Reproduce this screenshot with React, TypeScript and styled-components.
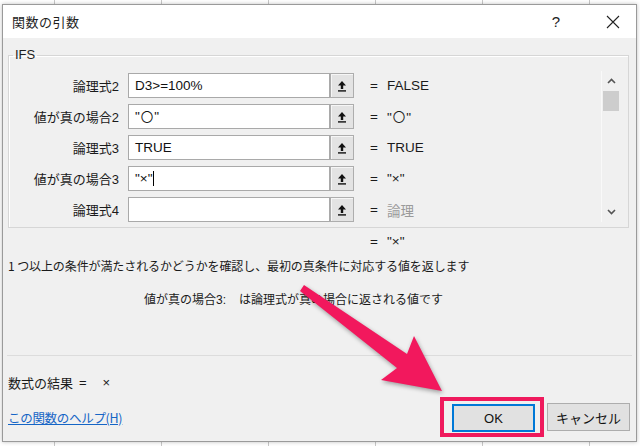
import styled, { createGlobalStyle } from "styled-components";

const GlobalStyle = createGlobalStyle`
  html, body {
    margin: 0;
    padding: 0;
    background: #ffffff;
  }
  body {
    font-family: "Liberation Sans", "Noto Sans CJK JP", sans-serif;
    font-size: 13px;
    color: #1a1a1a;
  }
`;

const Page = styled.div`
  position: relative;
  width: 640px;
  height: 446px;
  box-sizing: border-box;
  padding: 4px 3px 4px 2px;
  background-color: #ffffff;
  background-image: repeating-linear-gradient(
    to right,
    transparent 0 54px,
    #c8c8c8 54px 55px,
    transparent 55px 107px
  );
  overflow: hidden;
`;

const Dialog = styled.div`
  position: relative;
  width: 635px;
  height: 438px;
  box-sizing: border-box;
  border: 1px solid #9a9a9a;
  background: #f0f0f0;
  display: flex;
  flex-direction: column;
  box-shadow: 0 0 4px rgba(0, 0, 0, 0.25);
`;

const TitleBar = styled.div`
  height: 33px;
  flex: none;
  background: #ffffff;
  display: flex;
  align-items: center;
  padding-left: 9px;
`;

const Title = styled.div`
  flex: 1;
  font-family: "Noto Sans CJK JP", sans-serif;
  font-size: 13px;
  color: #1e1e1e;
  letter-spacing: 0.5px;
`;

const TitleButton = styled.div<{ $w: number }>`
  width: ${(p) => p.$w}px;
  height: 33px;
  display: flex;
  align-items: center;
  justify-content: center;
  font-family: "Liberation Sans", sans-serif;
  font-size: 15px;
  color: #222;
`;

const Group = styled.fieldset`
  margin: 9px 7px 0 5px;
  padding: 9px 8px 5px 4px;
  border: 1px solid #d6d6d6;
  box-shadow: inset 1px 1px 0 #ffffff;
  display: flex;
  min-width: 0;
`;

const Legend = styled.legend`
  padding: 0 2px;
  font-size: 13px;
  line-height: 16px;
  color: #1e1e1e;
`;

const Rows = styled.div`
  flex: 1;
  display: flex;
  flex-direction: column;
  gap: 6px;
  padding-top: 1px;
`;

const Row = styled.div`
  height: 25px;
  display: flex;
  align-items: center;
`;

const Label = styled.div`
  width: 106px;
  margin-right: 9px;
  text-align: right;
  font-size: 13px;
  white-space: nowrap;
`;

const Field = styled.div`
  width: 202px;
  height: 25px;
  box-sizing: border-box;
  border: 1px solid #a9a9a9;
  background: #ffffff;
  display: flex;
  align-items: center;
  padding-left: 6px;
  font-size: 13.5px;
  color: #111;
  white-space: pre;
`;

const Caret = styled.span`
  display: inline-block;
  width: 1px;
  height: 15px;
  margin-left: 1px;
  background: #000;
`;

const Circle = styled.span`
  font-family: "Noto Sans CJK JP", sans-serif;
  font-size: 12.5px;
  margin: 0 1px;
`;

const PickButton = styled.div`
  width: 24px;
  height: 25px;
  box-sizing: border-box;
  border: 1px solid #adadad;
  background: #e3e3e3;
  box-shadow: inset 1px 1px 0 #f6f6f6;
  display: flex;
  align-items: center;
  justify-content: center;
`;

const Equals = styled.span`
  margin-left: 16px;
  width: 17px;
  flex: none;
  font-size: 13.5px;
`;

const Value = styled.span<{ $muted?: boolean }>`
  font-size: 13.5px;
  color: ${(p) => (p.$muted ? "#9a9a9a" : "#1a1a1a")};
  white-space: pre;
`;

const Scrollbar = styled.div`
  width: 18px;
  margin-top: -1px;
  border-left: 1px solid #f9f9f9;
  display: flex;
  flex-direction: column;
  align-items: center;
`;

const ScrollArrow = styled.div`
  height: 20px;
  width: 100%;
  display: flex;
  align-items: center;
  justify-content: center;
`;

const Thumb = styled.div`
  width: 16px;
  height: 20px;
  background: #cdcdcd;
`;

const Track = styled.div`
  flex: 1;
`;

const PreviewRow = styled.div`
  margin-top: 4px;
  height: 18px;
  display: flex;
  align-items: center;
  padding-left: 351px;
`;

const Description = styled.div`
  margin-top: 7px;
  padding-left: 5px;
  height: 18px;
  line-height: 18px;
  font-family: "Noto Sans CJK JP", sans-serif;
  font-size: 12px;
  letter-spacing: -0.1px;
  white-space: nowrap;
`;

const ArgHelp = styled.div`
  margin-top: 14px;
  padding-left: 141px;
  height: 18px;
  display: flex;
  align-items: center;
  gap: 13px;
  font-size: 12px;
  white-space: nowrap;
`;

const Separator = styled.div`
  margin: 48px 4px 0 4px;
  height: 1px;
  background: #dcdcdc;
`;

const FormulaResult = styled.div`
  margin-top: 17px;
  padding-left: 5px;
  height: 18px;
  display: flex;
  align-items: center;
  gap: 6px;
  font-size: 13px;
  white-space: pre;
`;

const ResultValue = styled.span`
  margin-left: 10px;
`;

const Footer = styled.div`
  margin-top: 6px;
  padding: 0 6px 0 5px;
  height: 40px;
  display: flex;
  align-items: center;
`;

const HelpLink = styled.a`
  flex: 1;
  font-family: "Noto Sans CJK JP", sans-serif;
  font-size: 12.5px;
  color: #1565c6;
  text-decoration: underline;
  letter-spacing: -0.3px;
`;

const Highlight = styled.div`
  box-sizing: border-box;
  height: 40px;
  border: 4px solid #ef1a5d;
  padding: 3px 5px 1px 8px;
  display: flex;
  align-items: center;
  margin-right: 3px;
`;

const DialogButton = styled.button<{ $primary?: boolean }>`
  width: 83px;
  height: 28px;
  box-sizing: border-box;
  background: #e1e1e1;
  border: ${(p) => (p.$primary ? "2px solid #0078d7" : "1px solid #adadad")};
  font-family: "Liberation Sans", "Noto Sans CJK JP", sans-serif;
  font-size: 13px;
  color: #111;
  padding: 0;
`;

const ArrowLayer = styled.svg`
  position: absolute;
  left: 0;
  top: 0;
  pointer-events: none;
  filter: drop-shadow(1px 2px 2px rgba(0, 0, 0, 0.35));
`;

const PickIcon = () => (
  <svg width="10" height="12" viewBox="0 0 10 12">
    <path d="M5 1 L9 5.5 L6.2 5.5 L6.2 9 L3.8 9 L3.8 5.5 L1 5.5 Z" fill="#111" />
    <rect x="1" y="10.2" width="8" height="1.4" fill="#111" />
  </svg>
);

const Chevron = ({ up }: { up?: boolean }) => (
  <svg width="9" height="6" viewBox="0 0 9 6">
    <polyline
      points={up ? "1,5 4.5,1.5 8,5" : "1,1 4.5,4.5 8,1"}
      fill="none"
      stroke="#555"
      strokeWidth="1.6"
    />
  </svg>
);

const CloseIcon = () => (
  <svg width="14" height="14" viewBox="0 0 14 14">
    <path d="M1 1 L13 13 M13 1 L1 13" stroke="#222" strokeWidth="1.1" />
  </svg>
);

const Quoted = ({ circle }: { circle?: boolean }) =>
  circle ? (
    <>
      "<Circle>〇</Circle>"
    </>
  ) : (
    <>"×"</>
  );

type Arg = {
  label: string;
  value: React.ReactNode;
  result: React.ReactNode;
  muted?: boolean;
  caret?: boolean;
};

const args: Arg[] = [
  { label: "論理式2", value: "D3>=100%", result: "FALSE" },
  { label: "値が真の場合2", value: <Quoted circle />, result: <Quoted circle /> },
  { label: "論理式3", value: "TRUE", result: "TRUE" },
  { label: "値が真の場合3", value: <Quoted />, result: <Quoted />, caret: true },
  { label: "論理式4", value: "", result: "論理", muted: true },
];

export default function App() {
  return (
    <>
      <GlobalStyle />
      <Page>
        <Dialog>
          <TitleBar>
            <Title>関数の引数</Title>
            <TitleButton $w={24}>?</TitleButton>
            <TitleButton $w={22} />
            <TitleButton $w={46}>
              <CloseIcon />
            </TitleButton>
          </TitleBar>

          <Group>
            <Legend>IFS</Legend>
            <Rows>
              {args.map((a) => (
                <Row key={a.label}>
                  <Label>{a.label}</Label>
                  <Field>
                    {a.value}
                    {a.caret && <Caret />}
                  </Field>
                  <PickButton>
                    <PickIcon />
                  </PickButton>
                  <Equals>=</Equals>
                  <Value $muted={a.muted}>{a.result}</Value>
                </Row>
              ))}
            </Rows>
            <Scrollbar>
              <ScrollArrow>
                <Chevron up />
              </ScrollArrow>
              <Thumb />
              <Track />
              <ScrollArrow>
                <Chevron />
              </ScrollArrow>
            </Scrollbar>
          </Group>

          <PreviewRow>
            <Equals>=</Equals>
            <Value>"×"</Value>
          </PreviewRow>

          <Description>
            1 つ以上の条件が満たされるかどうかを確認し、最初の真条件に対応する値を返します
          </Description>

          <ArgHelp>
            <span>値が真の場合3:</span>
            <span>は論理式が真の場合に返される値です</span>
          </ArgHelp>

          <Separator />

          <FormulaResult>
            <span>数式の結果</span>
            <span>=</span>
            <ResultValue>×</ResultValue>
          </FormulaResult>

          <Footer>
            <HelpLink href="#">この関数のヘルプ(H)</HelpLink>
            <Highlight>
              <DialogButton $primary>OK</DialogButton>
            </Highlight>
            <DialogButton>キャンセル</DialogButton>
          </Footer>
        </Dialog>

        <ArrowLayer width="640" height="446" viewBox="0 0 640 446">
          <polygon
            points="304,285 407,354 414,336 442,391 381,380 397,368 300,291"
            fill="#f2185d"
          />
        </ArrowLayer>
      </Page>
    </>
  );
}
